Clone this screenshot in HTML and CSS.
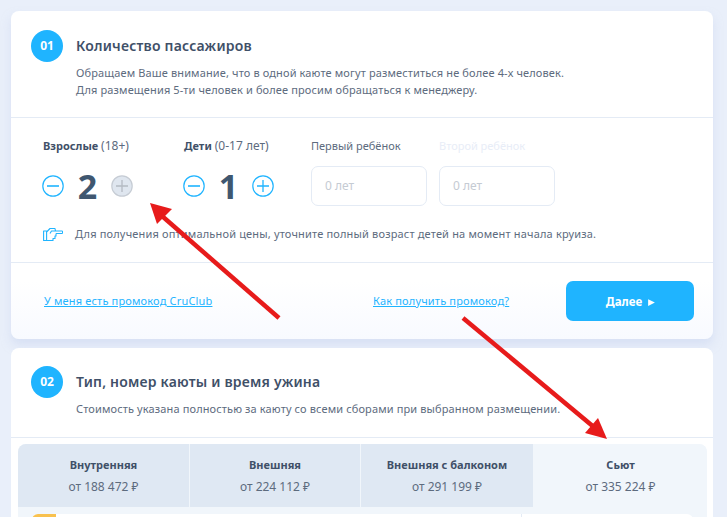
FILE: index.html
```html
<!DOCTYPE html>
<html lang="ru">
<head>
  <meta charset="UTF-8">
  <meta name="viewport" content="width=device-width, initial-scale=1.0">
  <title>Количество пассажиров</title>
  <link rel="stylesheet" href="styles.css">
</head>
<body>
  <div class="page">
    <section class="card first">
      <div class="head">
        <div class="num">01</div>
        <div class="head-text">
          <h2>Количество пассажиров</h2>
          <p>Обращаем Ваше внимание, что в одной каюте могут разместиться не более 4-х человек.<br>Для размещения 5-ти человек и более просим обращаться к менеджеру.</p>
        </div>
      </div>

      <div class="passengers">
        <div class="counters">
          <div class="counter adults">
            <div class="label"><b>Взрослые</b> <span>(18+)</span></div>
            <div class="stepper">
              <svg class="step" viewBox="0 0 22 22"><circle cx="11" cy="11" r="10.200" fill="none" stroke="#1fb4ff" stroke-width="1.200"/><path d="M5 11h12" stroke="#1fb4ff" stroke-width="1.600"/></svg>
              <span class="value">2</span>
              <svg class="step" viewBox="0 0 22 22"><circle cx="11" cy="11" r="10.200" fill="#dfe6ef" stroke="#c6ccd4" stroke-width="1.200"/><path d="M5 11h12M11 5v12" stroke="#b4bac2" stroke-width="1.300"/></svg>
            </div>
          </div>
          <div class="counter kids">
            <div class="label"><b>Дети</b> <span>(0-17 лет)</span></div>
            <div class="stepper">
              <svg class="step" viewBox="0 0 22 22"><circle cx="11" cy="11" r="10.200" fill="none" stroke="#1fb4ff" stroke-width="1.200"/><path d="M5 11h12" stroke="#1fb4ff" stroke-width="1.600"/></svg>
              <span class="value">1</span>
              <svg class="step" viewBox="0 0 22 22"><circle cx="11" cy="11" r="10.200" fill="none" stroke="#1fb4ff" stroke-width="1.200"/><path d="M5 11h12M11 5v12" stroke="#1fb4ff" stroke-width="1.300"/></svg>
            </div>
          </div>
          <div class="child">
            <div class="label">Первый ребёнок</div>
            <div class="age">0 лет</div>
          </div>
          <div class="child off">
            <div class="label">Второй ребёнок</div>
            <div class="age">0 лет</div>
          </div>
        </div>
        <div class="hint">
          <svg class="hand" viewBox="0 0 20 15" fill="none" stroke="#1fb4ff" stroke-width="1.100" stroke-linejoin="round"><path d="M.6 4h3v9.500h-3zM3.600 5L7 1.500h5l.5 2.500h6.500c.8 0 .8 2.500 0 2.500h-6M7 6.500l1.500-2.500h4M13 6.500v2.500h-1v2.500h-2v2H3.600"/></svg>
          <span>Для получения оптимальной цены, уточните полный возраст детей на момент начала круиза.</span>
        </div>
      </div>

      <div class="actions">
        <a href="#" class="promo">У меня есть промокод CruClub</a>
        <a href="#" class="how">Как получить промокод?</a>
        <button class="next">Далее<svg viewBox="0 0 8 8"><path d="M1 1l6 3-6 3z" fill="#fff"/></svg></button>
      </div>
    </section>

    <section class="card second">
      <div class="head">
        <div class="num">02</div>
        <div class="head-text">
          <h2>Тип, номер каюты и время ужина</h2>
          <p>Стоимость указана полностью за каюту со всеми сборами при выбранном размещении.</p>
        </div>
      </div>
      <div class="cabins">
        <div class="tabs">
          <div class="tab"><b>Внутренняя</b><span>от 188 472 ₽</span></div>
          <div class="tab"><b>Внешняя</b><span>от 224 112 ₽</span></div>
          <div class="tab"><b>Внешняя с балконом</b><span>от 291 199 ₽</span></div>
          <div class="tab active"><b>Сьют</b><span>от 335 224 ₽</span></div>
        </div>
        <div class="panel">
          <div class="offer">
            <div class="badge"></div>
            <div class="offer-side"></div>
          </div>
        </div>
      </div>
    </section>
  </div>

  <svg class="arrows" viewBox="0 0 727 517">
    <path d="M279 318L162 216" stroke="#e71b1b" stroke-width="4.500"/>
    <path d="M150 203l22 6-15 15z" fill="#e71b1b"/>
    <path d="M463 318L595 428" stroke="#e71b1b" stroke-width="4.500"/>
    <path d="M607 439l-9-21-13 15z" fill="#e71b1b"/>
  </svg>
</body>
</html>
```
FILE: styles.css
```css
body {
  font-family: "Noto Sans", Arial, sans-serif;
  margin: 0;
  height: 517px;
  overflow: hidden;
  position: relative;
  background: #e9effa;
  color: #3f5068;
}
.page {
  padding: 11px 14px 0 11px;
  height: 506px;
  overflow: hidden;
}
.card {
  background: #fff;
  border-radius: 8px;
}
.first {
  margin-bottom: 9px;
  box-shadow: 0 6px 10px rgba(200, 212, 240, 0.5);
  background: linear-gradient(#fff 270px, #f8faff);
}
.head {
  display: flex;
  gap: 13px;
  padding: 19px 20px 0;
  height: 87px;
  border-bottom: 1px solid #e4ebf5;
}
.second .head {
  padding-top: 18px;
  height: 71px;
}
.num {
  width: 32px;
  height: 32px;
  border-radius: 50%;
  background: #1fb4ff;
  color: #fff;
  font-size: 12px;
  font-weight: 700;
  text-align: center;
  line-height: 32px;
  flex-shrink: 0;
}
h2 {
  margin: 0;
  font-size: 14px;
  line-height: 32px;
  font-weight: 600;
  letter-spacing: 0.2px;
  color: #3f5068;
}
.head-text p {
  margin: 2px 0 0;
  font-size: 11px;
  line-height: 17px;
  letter-spacing: 0.13px;
  color: #5d6b7e;
}
.passengers {
  height: 144px;
  padding: 0 32px;
  border-bottom: 1px solid #e4ebf5;
}
.counters {
  display: flex;
  padding-top: 20px;
}
.counter.adults {
  width: 141px;
}
.counter.kids {
  width: 127px;
}
.label {
  font-size: 11px;
  line-height: 16px;
  color: #5d6b7e;
  white-space: nowrap;
}
.label b {
  font-weight: 700;
  color: #3f5068;
}
.label span {
  font-size: 12px;
}
.stepper {
  display: flex;
  align-items: center;
  margin-top: 12px;
  height: 40px;
}
.step {
  width: 22px;
  height: 22px;
}
.step:first-child {
  margin-left: -1px;
}
.value {
  width: 47px;
  text-align: center;
  font-size: 34px;
  font-weight: 700;
  line-height: 40px;
  color: #3f5770;
}
.child {
  width: 128px;
}
.age {
  width: 101px;
  height: 38px;
  margin-top: 12px;
  border: 1px solid #e4ebf5;
  border-radius: 7px;
  font-size: 12px;
  line-height: 38px;
  padding-left: 13px;
  color: #c5cbd3;
}
.child.off .label {
  color: #e8edf7;
}
.hint {
  display: flex;
  align-items: center;
  gap: 12px;
  margin-top: 20px;
  font-size: 11px;
  line-height: 16px;
  letter-spacing: 0.17px;
  color: #5d6b7e;
}
.hand {
  width: 20px;
  height: 15px;
}
.actions {
  display: flex;
  align-items: center;
  height: 76px;
  padding: 0 19px 0 33px;
}
.actions a {
  font-size: 11px;
  letter-spacing: 0.17px;
  margin-bottom: 2px;
  color: #1fb4ff;
}
.promo {
  width: 329px;
}
.how {
  width: 193px;
}
.next {
  width: 128px;
  height: 40px;
  border: none;
  border-radius: 7px;
  background: #1fb4ff;
  color: #fff;
  font-family: inherit;
  font-size: 11.5px;
  font-weight: 700;
  padding-left: 8px;
}
.next svg {
  width: 9px;
  height: 9px;
  margin-left: 5px;
  vertical-align: -1px;
}
.cabins {
  margin: 6px 6px 0 7px;
  border-radius: 8px 8px 0 0;
  overflow: hidden;
  background: #f1f6fb;
}
.tabs {
  display: grid;
  grid-template-columns: 172px 171px 173px 1fr;
  height: 63px;
}
.tab {
  background: #dfe8f3;
  border-right: 1px solid #f1f6fb;
  display: flex;
  flex-direction: column;
  align-items: center;
  padding-top: 10px;
  font-size: 12px;
  line-height: 22px;
  color: #5d6b7e;
}
.tab b {
  font-size: 11px;
  font-weight: 700;
  color: #3f5068;
}
.tab.active {
  background: #f1f6fb;
  border-right: none;
}
.panel {
  padding: 7px 14px 0;
}
.offer {
  display: flex;
  background: #fff;
  border-radius: 6px;
  height: 60px;
}
.badge {
  width: 24px;
  height: 20px;
  background: #f8c14f;
  border-radius: 6px 0 6px 0;
}
.offer-side {
  margin-left: auto;
  width: 171px;
  border-left: 1px solid #e4ebf5;
}
.arrows {
  position: absolute;
  left: 0;
  top: 0;
  width: 727px;
  height: 517px;
  pointer-events: none;
}
```
